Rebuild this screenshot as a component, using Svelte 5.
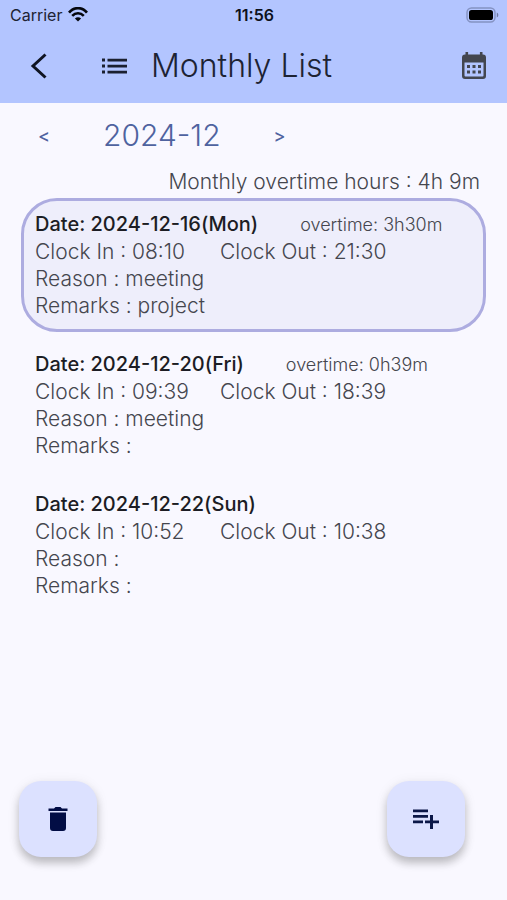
<script>
  const entries = [
    { date: '2024-12-16(Mon)', overtime: '3h30m', start: '08:10', end: '21:30', reason: 'meeting', remarks: 'project', selected: true },
    { date: '2024-12-20(Fri)', overtime: '0h39m', start: '09:39', end: '18:39', reason: 'meeting', remarks: '' },
    { date: '2024-12-22(Sun)', overtime: '', start: '10:52', end: '10:38', reason: '', remarks: '' }
  ];
</script>

<div class="screen">
  <header>
    <div class="status">
      <div class="carrier">
        <span>Carrier</span>
        <svg width="20" height="15" viewBox="0 0 20 15" fill="none" stroke="#05070d">
          <path d="M1 5.6C6-.3 14-.3 19 5.6" stroke-width="2.7" />
          <path d="M4.2 8.9c3.3-3.7 8.3-3.7 11.6 0" stroke-width="2.5" />
          <path d="M10 14.6 6.9 11.4c1.8-1.7 4.4-1.7 6.2 0Z" fill="#05070d" stroke="none" />
        </svg>
      </div>
      <time>11:56</time>
      <svg class="battery" width="33" height="16" viewBox="0 0 33 16">
        <rect x="1" y="1" width="28" height="14" rx="4.5" fill="none" stroke="#8492c2" stroke-width="1.4" />
        <rect x="3" y="3" width="24" height="10" rx="2.6" fill="#000" />
        <path d="M30.8 5.5c2 .8 2 4.2 0 5Z" fill="#6f7aa3" />
      </svg>
    </div>
    <div class="bar">
      <button class="icon" aria-label="Back">
        <svg width="18" height="28" viewBox="0 0 18 28" fill="none" stroke="#0f1422" stroke-width="3"><path d="M15.5 2.5 3 14l12.5 11.5" /></svg>
      </button>
      <svg class="list" width="26" height="16" viewBox="0 0 26 16" fill="#1b2030">
        <path d="M0 .5h3v3H0zM0 6.500h3v3H0zM0 12.500h3v3H0zM5.500.7H25v2.700H5.500zM5.500 6.700H25v2.700H5.500zM5.500 12.700H25v2.700H5.500z" />
      </svg>
      <h1>Monthly List</h1>
      <button class="icon" aria-label="Calendar">
        <svg width="26" height="28" viewBox="0 0 26 28">
          <path fill="#43464f" fill-rule="evenodd" d="M4.500 0h2.600v2.500h11.800V0h2.600v2.500h.5a3 3 0 0 1 3 3V24a3 3 0 0 1-3 3H4a3 3 0 0 1-3-3V5.500a3 3 0 0 1 3-3h.5ZM3.500 10.500V23.500a1 1 0 0 0 1 1h17a1 1 0 0 0 1-1v-13Z" />
          <path fill="#43464f" d="M6 13h3v3H6zm5.500 0h3v3h-3zm5.500 0h3v3h-3zM6 18.500h3v3H6zm5.500 0h3v3h-3zm5.500 0h3v3h-3z" />
        </svg>
      </button>
    </div>
  </header>

  <main>
    <nav>
      <button class="step" aria-label="Previous month">&lt;</button>
      <button class="month">2024-12</button>
      <button class="step" aria-label="Next month">&gt;</button>
    </nav>
    <p class="total">Monthly overtime hours : 4h 9m</p>
    <ul>
      {#each entries as e}
        <li class:selected={e.selected}>
          <div class="head">
            <strong>Date: {e.date}</strong>
            {#if e.overtime}<span class="over">overtime: {e.overtime}</span>{/if}
          </div>
          <div class="clock"><span>Clock In : {e.start}</span><span>Clock Out : {e.end}</span></div>
          <div>Reason : {e.reason}</div>
          <div>Remarks : {e.remarks}</div>
        </li>
      {/each}
    </ul>
  </main>

  <footer>
    <button class="fab" aria-label="Delete">
      <svg width="20" height="26" viewBox="0 0 20 26" fill="#020d45">
        <path d="M.500 2.500H6L7.500 1h5L14 2.500h5.500V5H.500zM2 6.500h16V22a3 3 0 0 1-3 3H5a3 3 0 0 1-3-3Z" />
      </svg>
    </button>
    <button class="fab" aria-label="Add entry">
      <svg width="26" height="20" viewBox="0 0 26 20" fill="#0b1748">
        <path d="M0 .5h15V3.200H0zM0 6h15v2.700H0zM0 11.500h10v2.700H0zM17 6h3v5.500h6v2.700h-6V20h-3v-5.800h-5v-2.700h5z" />
      </svg>
    </button>
  </footer>
</div>

<style>
  :global(body) { margin: 0; background: #f9f8ff; }
  .screen {
    display: flex;
    flex-direction: column;
    min-height: 100vh;
    font-family: Inter, "Liberation Sans", sans-serif;
    font-weight: 300;
    color: #45464e;
  }
  button { border: 0; padding: 0; background: none; font: inherit; color: inherit; cursor: pointer; }
  svg { display: block; flex: none; }
  header { background: #b3c5ff; color: #1d2333; }
  .status {
    display: grid;
    grid-template-columns: 1fr auto 1fr;
    align-items: center;
    height: 28px;
    padding: 1px 8px 0 10px;
    box-sizing: border-box;
    font-size: 16px;
    font-weight: 400;
  }
  .carrier { display: flex; align-items: center; gap: 6px; }
  time { font-weight: 600; color: #0d111c; font-size: 16px; }
  .battery { justify-self: end; }
  .bar { display: flex; align-items: center; height: 75px; padding: 0 20px 0 30px; }
  .icon { display: flex; }
  .list { margin-left: 54px; }
  h1 { flex: 1; margin: 0 0 0 23px; font-size: 32px; font-weight: 300; line-height: 40px; }
  main { flex: 1; padding: 12px 21px 0; }
  nav { display: flex; align-items: center; height: 40px; padding-left: 15px; color: #4f639f; }
  .step { width: 16px; font-size: 18px; font-weight: 500; }
  .month { margin: 0 51px; font-size: 30px; }
  .total { margin: 13px 6px 3px 0; text-align: right; font-size: 21px; line-height: 27px; }
  ul { display: flex; flex-direction: column; gap: 6px; margin: 0; padding: 0; list-style: none; }
  li {
    padding: 10px 11px;
    border: 3px solid transparent;
    border-radius: 36px;
    font-size: 21px;
    line-height: 27px;
  }
  .selected { border-color: #adace0; background: #eeeefb; }
  .head, .clock { display: flex; align-items: center; }
  .head { gap: 42px; }
  .clock { gap: 30px; }
  .clock span:first-child { min-width: 155px; }
  strong { font-size: 20px; font-weight: 500; color: #1c1d24; }
  .over { font-size: 18px; }
  footer { display: flex; justify-content: space-between; padding: 0 42px 43px 19px; }
  .fab {
    display: flex;
    align-items: center;
    justify-content: center;
    width: 78px;
    height: 76px;
    border-radius: 22px;
    background: #dce1ff;
    box-shadow: 0 6px 9px rgba(0, 0, 0, 0.22), 0 2px 14px rgba(0, 0, 0, 0.07);
  }
</style>
